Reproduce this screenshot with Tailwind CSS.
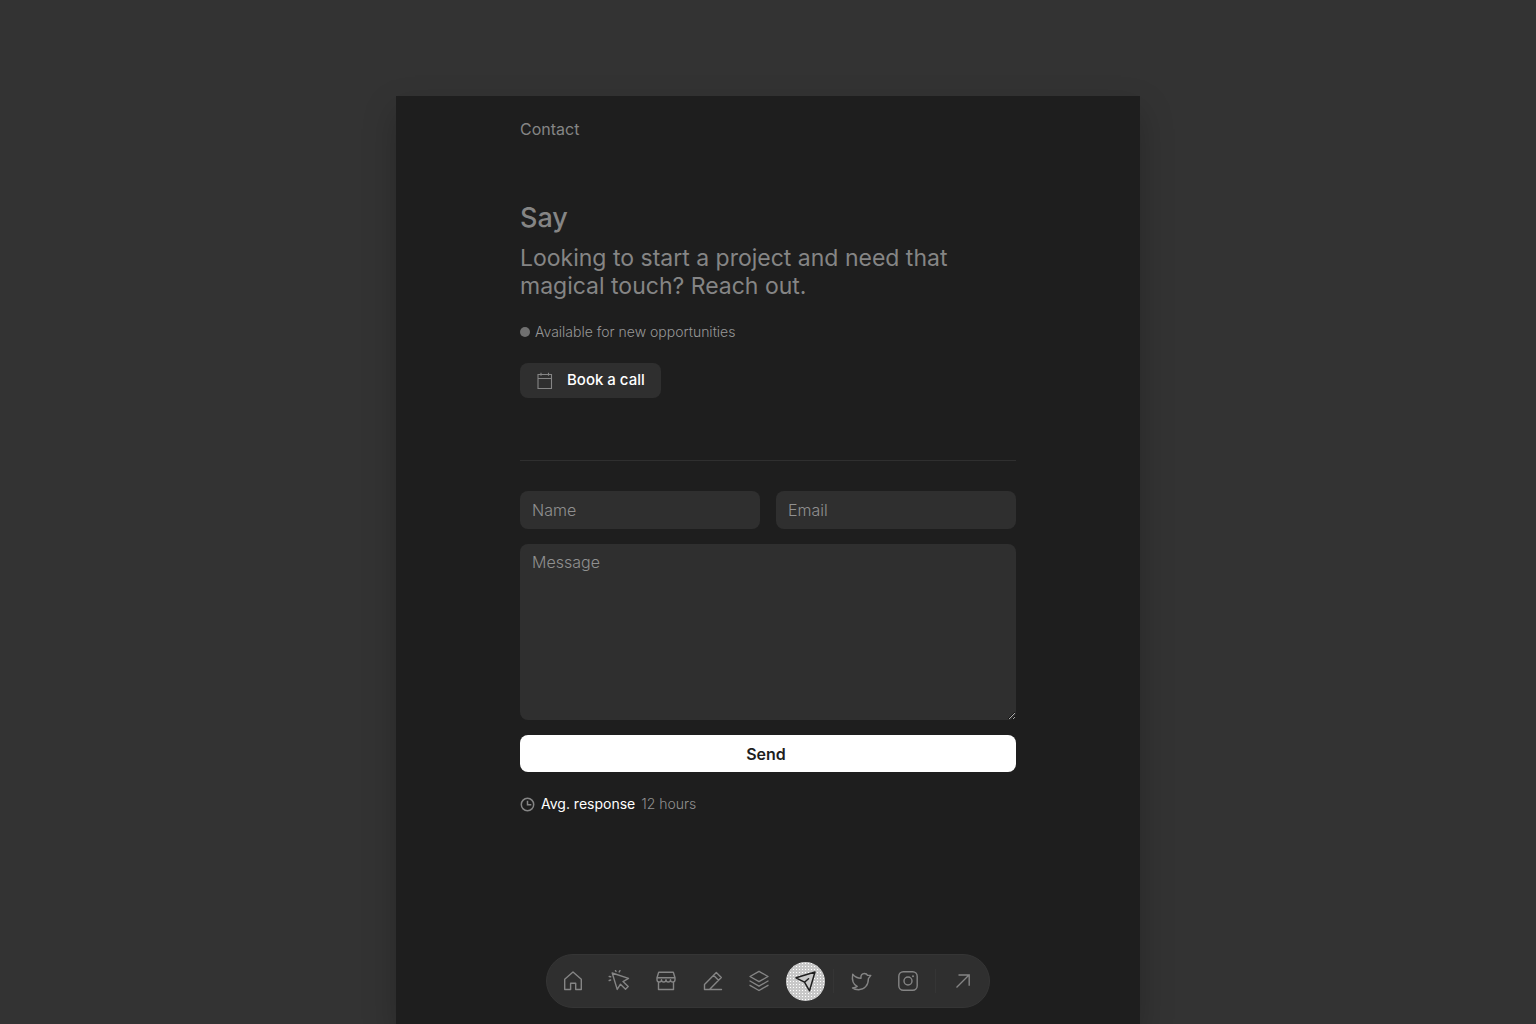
<!DOCTYPE html>
<html lang="en">
<head>
    <meta charset="UTF-8">
    <meta name="viewport" content="width=device-width, initial-scale=1.0">
    <title>Contact</title>
    <script src="https://cdn.jsdelivr.net/npm/@tailwindcss/browser@4"></script>
</head>
<body class="min-h-screen flex flex-col bg-[#333333] pt-24 font-['Inter',sans-serif] text-[#858585]">

    <div class="w-full max-w-[744px] mx-auto grow flex flex-col justify-between bg-[#1e1e1e] shadow-[0_14px_32px_rgba(0,0,0,0.22)]">
        <main class="w-full max-w-[528px] mx-auto px-4">
            <header class="pt-[21px]">
                <a href="#" class="block w-fit text-base leading-6">Contact</a>
            </header>

            <!-- Intro -->
            <section class="pt-[59px] pb-[62px] border-b border-[#2f2f2f]">
                <h1 class="text-[27px] leading-9 font-medium">Say</h1>
                <p class="mt-2 text-[23px] leading-7">Looking to start a project and need that magical touch? Reach out.</p>
                <p class="mt-5 flex items-center gap-[5px] text-sm leading-[23px] font-light text-[#969696]">
                    <span class="size-[10px] rounded-full bg-[#707070]"></span>
                    Available for new opportunities
                </p>
                <button type="button" class="mt-5 h-[35px] px-4 flex items-center gap-[13px] rounded-lg bg-[#2f2f2f] text-[15px] font-medium text-white">
                    <svg class="size-[18px] text-[#858585]" viewBox="0 0 18 18" fill="none" stroke="currentColor" stroke-width="1.100"><path d="M2 2.500h13.500v14H2zM2 6.500h13.500M5 .8v3M12.500.8v3"/></svg>
                    Book a call
                </button>
            </section>

            <!-- Form -->
            <form class="mt-[30px] grid grid-cols-2 gap-x-4 gap-y-[15px]">
                <input type="text" name="name" aria-label="Name" placeholder="Name" class="min-w-0 h-[38px] px-3 pb-px rounded-lg bg-[#2f2f2f] text-base font-light text-white placeholder:text-[#909090] outline-none">
                <input type="email" name="email" aria-label="Email" placeholder="Email" class="min-w-0 h-[38px] px-3 pb-px rounded-lg bg-[#2f2f2f] text-base font-light text-white placeholder:text-[#909090] outline-none">
                <textarea name="message" aria-label="Message" placeholder="Message" class="col-span-2 block h-44 px-3 py-[6px] rounded-lg bg-[#2f2f2f] text-base leading-6 font-light text-white placeholder:text-[#909090] outline-none resize-y"></textarea>
                <button type="submit" class="col-span-2 h-[37px] pr-1 rounded-lg bg-white text-base font-semibold text-[#1e1e1e]">Send</button>
            </form>

            <p class="mt-5 flex items-center gap-[6px] text-sm leading-6">
                <svg class="size-[15px]" viewBox="0 0 15 15" fill="none" stroke="currentColor" stroke-width="1.500"><circle cx="7.500" cy="7.500" r="6.200"/><path d="M7.500 3.700v4h3.800"/></svg>
                <span class="font-normal text-white">Avg. response</span>
                <span class="font-light text-[#909090]">12 hours</span>
            </p>
        </main>

        <!-- Dock -->
        <nav class="w-full max-w-[444px] h-[54px] mx-auto mb-4 px-[6px] flex items-center justify-between rounded-full border border-[#353535] bg-[#2f2f2f]">
            <a href="#" aria-label="Home" class="size-[39px] flex items-center justify-center rounded-full">
                <svg class="size-[22px]" viewBox="0 0 22 22" fill="none" stroke="currentColor" stroke-width="1.400" stroke-linejoin="round"><path d="M2.700 9.200L11 2l8.300 7.200v10.300h-5.600v-6.300H8.600v6.300H2.700z"/></svg>
            </a>
            <a href="#" aria-label="Work" class="size-[39px] flex items-center justify-center rounded-full">
                <svg class="size-[22px]" viewBox="0 0 22 22" fill="none" stroke="currentColor" stroke-width="1.400" stroke-linecap="round" stroke-linejoin="round"><path d="M4.200 3l16.300 5.400-5.500 3.200 5.200 5-2.700 2.600-5-5-3.300 5.200zM7.500.6l.5.8M12 .6l-.8 1.300M1.200 6.500l1.500.3M1.200 10.500l1.500-.5"/></svg>
            </a>
            <a href="#" aria-label="Shop" class="size-[39px] flex items-center justify-center rounded-full">
                <svg class="size-[22px]" viewBox="0 0 22 22" fill="none" stroke="currentColor" stroke-width="1.400" stroke-linejoin="round"><path d="M3.700 2.300h14.600L20 7.800v2a2.200 2.200 0 0 1-2.200 2.200c-1.500 0-2.300-.9-2.300-2.200 0 1.300-1 2.200-2.200 2.200-1.300 0-2.300-.9-2.300-2.200 0 1.300-1 2.200-2.300 2.200-1.200 0-2.200-.9-2.200-2.200 0 1.300-.8 2.200-2.300 2.200A2.200 2.200 0 0 1 2 9.800v-2zM2 7.800h18M3.500 12v7.500h15V12"/></svg>
            </a>
            <a href="#" aria-label="Writing" class="size-[39px] flex items-center justify-center rounded-full">
                <svg class="size-[22px]" viewBox="0 0 22 22" fill="none" stroke="currentColor" stroke-width="1.400" stroke-linecap="round" stroke-linejoin="round"><path d="M2.500 19.500v-5L14.300 2.500l5 5L7.500 19.500zM11.500 5.300l5 5M2.500 19.500h17"/></svg>
            </a>
            <a href="#" aria-label="Stack" class="size-[39px] flex items-center justify-center rounded-full">
                <svg class="size-[22px]" viewBox="0 0 22 22" fill="none" stroke="currentColor" stroke-width="1.400" stroke-linecap="round" stroke-linejoin="round"><path d="M11 1.300l9 5.200-9 5.200-9-5.200zM2 11l9 5.200L20 11M2 15.300l9 5.200 9-5.200"/></svg>
            </a>
            <a href="#" aria-label="Contact" aria-current="page" class="size-[39px] flex items-center justify-center rounded-full bg-[#c8c8c8] bg-[radial-gradient(#ffffff_30%,transparent_32%)] bg-size-[3px_3px] text-[#1e1e1e]">
                <svg class="size-[22px]" viewBox="0 0 22 22" fill="#c8c8c8" stroke="currentColor" stroke-width="1.500" stroke-linecap="round" stroke-linejoin="round"><path d="M1 7.800L20 2l-5.500 18.800-5-8.600zM9.500 12.200l4-3.400"/></svg>
            </a>
            <span class="w-px h-6 bg-[#353535]"></span>
            <a href="#" aria-label="Twitter" class="size-[39px] flex items-center justify-center rounded-full">
                <svg class="size-[22px]" viewBox="0 0 22 22" fill="none" stroke="currentColor" stroke-width="1.400" stroke-linejoin="round"><path d="M2.700 4.200C5 7 7.700 8.200 11 8.200c-.5-3 1-4.700 3.400-4.700 1.500 0 2.600.7 3.200 1.900h3.200l-2.400 3.300c0 6.500-4 11-9.800 11-2.600 0-4.800-.7-6.100-1.800 2 0 3.500-.5 4.700-1.500-4-1.800-5.400-6.700-4.500-12.200z"/></svg>
            </a>
            <a href="#" aria-label="Instagram" class="size-[39px] flex items-center justify-center rounded-full">
                <svg class="size-[22px]" viewBox="0 0 22 22" fill="none" stroke="currentColor" stroke-width="1.400"><rect x="1.800" y="1.800" width="18.400" height="18.400" rx="4.500"/><circle cx="11" cy="11" r="4"/><circle cx="16" cy="6.200" r="1" fill="currentColor" stroke="none"/></svg>
            </a>
            <span class="w-px h-6 bg-[#353535]"></span>
            <a href="#" aria-label="Open site" class="size-[39px] flex items-center justify-center rounded-full">
                <svg class="size-[22px]" viewBox="0 0 22 22" fill="none" stroke="currentColor" stroke-width="1.400"><path d="M4.500 17.500l12.500-12.500M6.500 5h10.700v10.700"/></svg>
            </a>
        </nav>
    </div>

</body>
</html>
